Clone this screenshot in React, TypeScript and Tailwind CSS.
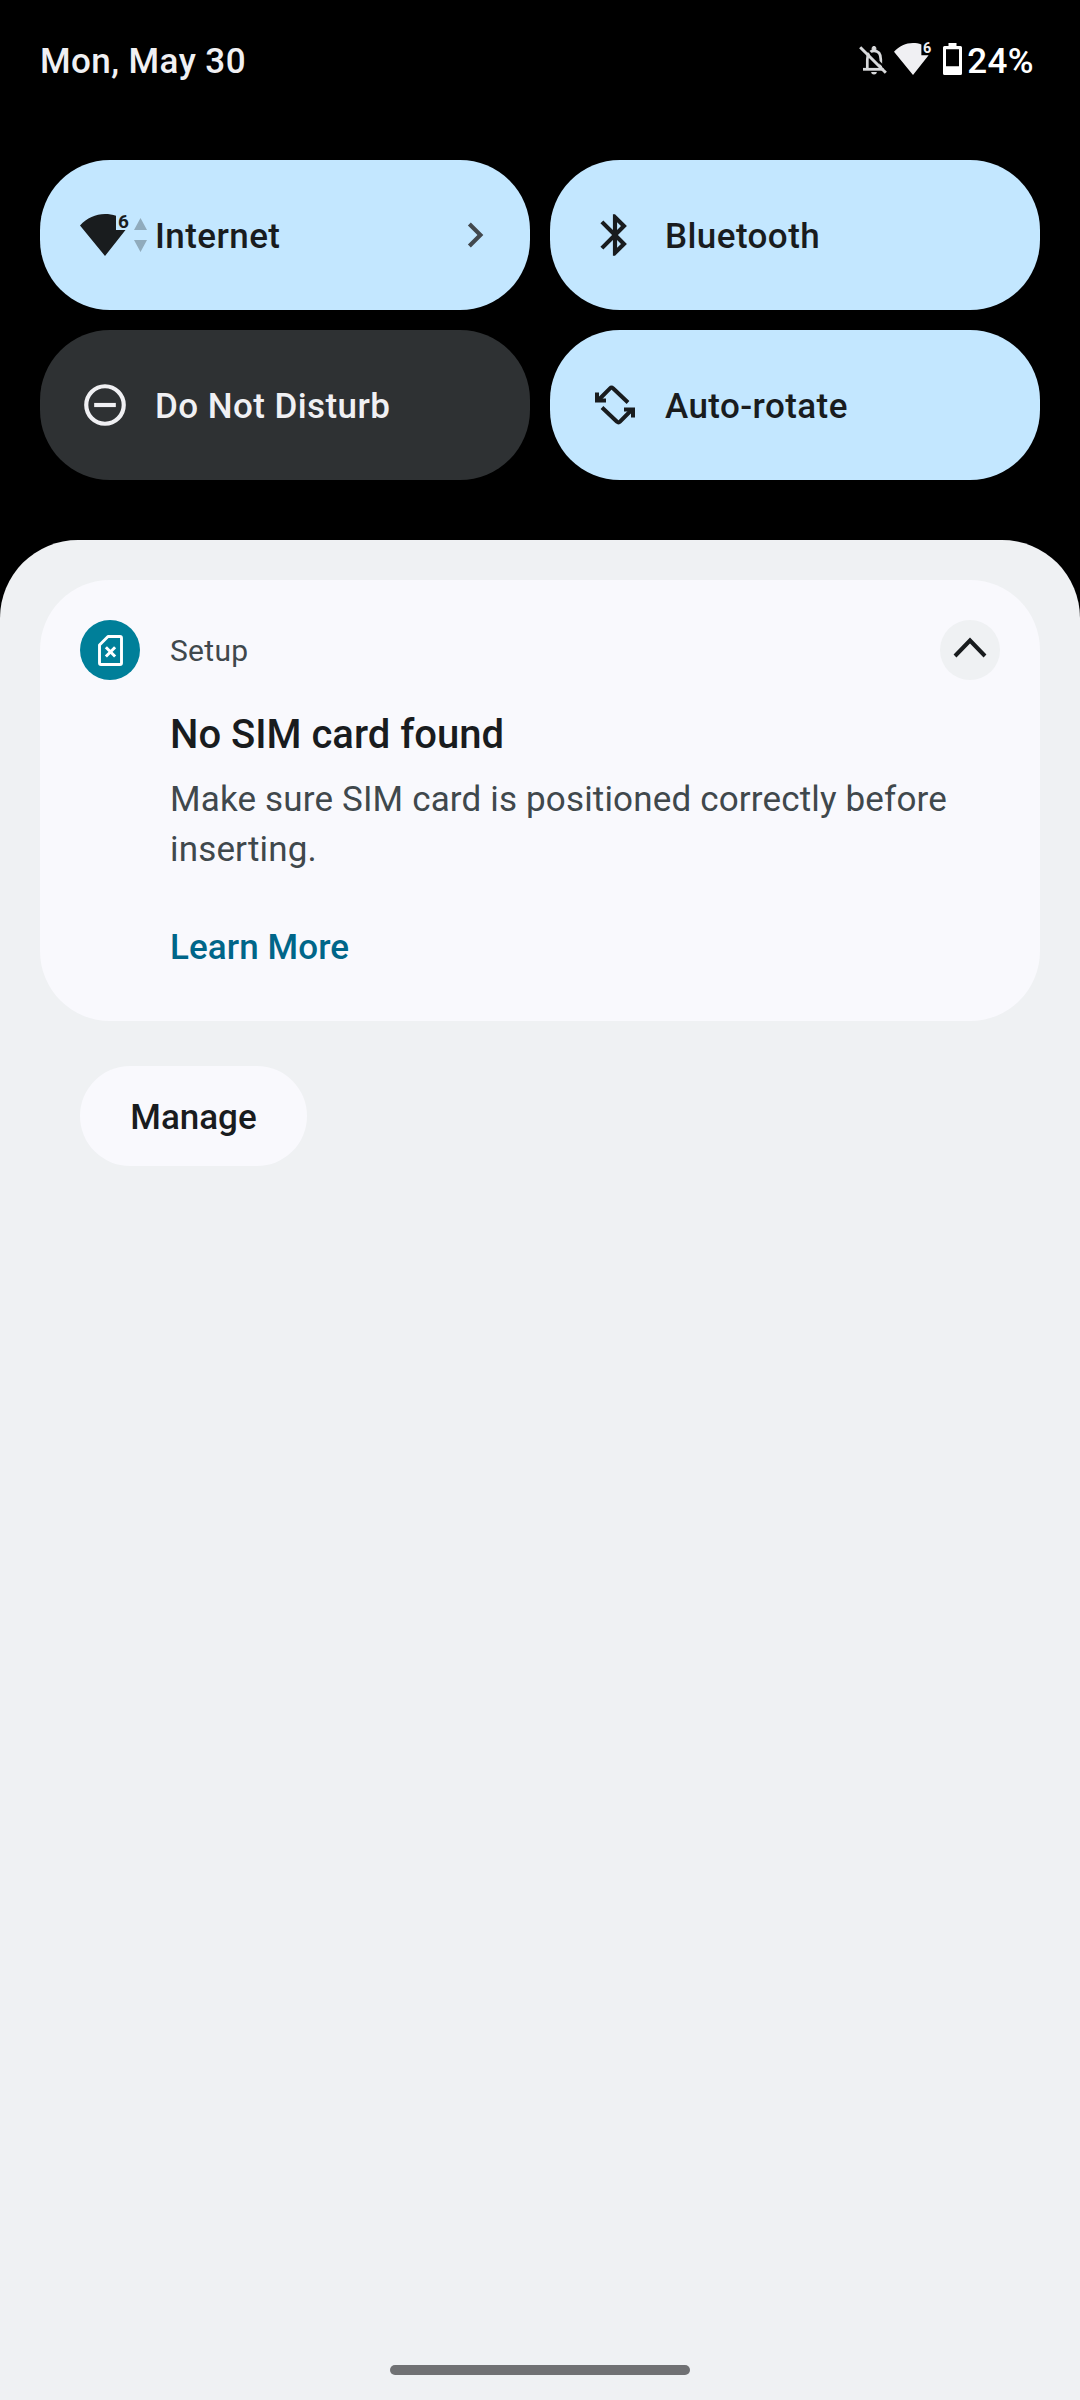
import type { ReactNode } from 'react';

interface IconProps {
  className?: string;
}

interface TileProps {
  label: string;
  icon: ReactNode;
  active?: boolean;
  chevron?: boolean;
}

function BellOffIcon({ className = '' }: IconProps) {
  return (
    <svg viewBox="0 0 28 30" className={className} fill="none" stroke="currentColor">
      <path d="M8.300 23.500V14.500C8.300 9 10.500 5.800 15 5.800S21.800 9 21.800 14.500V22" strokeWidth="2.700" />
      <path d="M4 24.300H24.500" strokeWidth="2.800" />
      <path d="M13.100 5.500V3.300a1.900 1.900 0 0 1 3.800 0V5.500z" fill="currentColor" strokeWidth="1" />
      <path d="M12.200 27h5.600a2.800 2.400 0 0 1-5.600 0z" fill="currentColor" stroke="none" />
      <path d="M4 .8L28 24.800" stroke="#000" strokeWidth="2" />
      <path d="M1.200 2.200L26.800 27.800" strokeWidth="3" />
    </svg>
  );
}

function WifiSixIcon({ className = '' }: IconProps) {
  return (
    <svg viewBox="0 0 50 42" className={`overflow-visible ${className}`} fill="currentColor">
      <path d="M25 42L0 11.500C7 4 15.500 0 25 0C29 0 32.500 .6 36 1.800V16H45.500Z" />
      <text x="38.100" y="13.600" fontSize="19" fontWeight="700" fontFamily="Roboto, sans-serif">
        6
      </text>
    </svg>
  );
}

function BatteryIcon({ className = '' }: IconProps) {
  return (
    <svg viewBox="0 0 19 32" className={className} fill="currentColor">
      <path
        fillRule="evenodd"
        d="M5.500 0h8v3h4A1.500 1.500 0 0 1 19 4.500v26a1.500 1.500 0 0 1-1.500 1.500h-16A1.500 1.500 0 0 1 0 30.500v-26A1.500 1.500 0 0 1 1.500 3h4zM3 6.300v17h13v-17z"
      />
    </svg>
  );
}

function DataArrowsIcon({ className = '' }: IconProps) {
  return (
    <svg viewBox="0 0 13 34" className={className} fill="currentColor">
      <path d="M6.500 0L13 12H0zM6.500 34L0 22H13z" />
    </svg>
  );
}

function BluetoothIcon() {
  return (
    <svg viewBox="0 0 24 24" className="size-[50px]" fill="currentColor">
      <path d="M17.710 7.710L12 2h-1v7.590L6.410 5 5 6.410 10.590 12 5 17.590 6.410 19 11 14.410V22h1l5.710-5.710-4.300-4.290 4.300-4.290zM13 5.830l1.880 1.880L13 9.590V5.830zm1.880 10.460L13 18.170v-3.760l1.880 1.880z" />
    </svg>
  );
}

function DoNotDisturbIcon() {
  return (
    <svg viewBox="0 0 24 24" className="size-[50px]" fill="none" stroke="currentColor" strokeWidth="2">
      <circle cx="12" cy="12" r="9" />
      <path d="M6.800 12h10.400" />
    </svg>
  );
}

function RotateIcon() {
  return (
    <svg viewBox="0 0 50 50" className="size-[50px]" fill="none" stroke="currentColor" strokeWidth="4">
      <path d="M9 19.500L20 8.300Q21.500 6.800 23 8.300L38 22.500" />
      <path d="M41 30.500L30 41.700Q28.500 43.200 27 41.700L12 27.500" />
      <path d="M5 12.500h4v6h7v4H5zM45 37.500h-4v-6h-7v-4h11z" fill="currentColor" stroke="none" />
    </svg>
  );
}

function SimErrorIcon() {
  return (
    <svg viewBox="0 0 25 31" className="h-[31px] w-[25px]" fill="none" stroke="currentColor">
      <path d="M10 1.500H22Q23.500 1.500 23.500 3V28Q23.500 29.500 22 29.500H3Q1.500 29.500 1.500 28V10Z" strokeWidth="2.900" strokeLinejoin="round" />
      <path d="M7.900 12.300L17.100 21.500M17.100 12.300L7.900 21.500" strokeWidth="3" />
    </svg>
  );
}

function Tile({ label, icon, active = false, chevron = false }: TileProps) {
  return (
    <button
      className={`flex h-[150px] items-center rounded-[70px] pr-[30px] pl-10 text-left ${
        active ? 'bg-[#c3e7ff] text-[#191c1e]' : 'bg-[#2e3133] text-[#f0f0f3]'
      }`}
    >
      <span className="flex w-[75px] items-center">{icon}</span>
      <span className="flex-1 pt-1 text-[35px] leading-[50px] font-medium tracking-[0.42px]">{label}</span>
      {chevron && (
        <svg viewBox="0 0 24 24" className="size-[50px] text-[#43494e]" fill="currentColor">
          <path d="M10 6L8.590 7.410 13.170 12l-4.580 4.590L10 18l6-6z" />
        </svg>
      )}
    </button>
  );
}

export default function App() {
  return (
    <div className="flex h-[2400px] w-[1080px] flex-col bg-black font-['Roboto',sans-serif]">
      {/* Status bar */}
      <header className="flex h-[160px] items-start justify-between pt-[37px] pr-[46px] pl-10 text-[#f0f0f3]">
        <span className="text-[35px] leading-[50px] font-medium tracking-[0.42px]">Mon, May 30</span>
        <div className="flex items-start">
          <BellOffIcon className="mt-2 h-[30px] w-7 text-[#d8d9db]" />
          <WifiSixIcon className="mt-1.5 ml-[7px] h-8 w-[38px]" />
          <BatteryIcon className="mt-1.5 ml-[11px] h-8 w-[19px] text-white" />
          <span className="ml-[5px] text-[35px] leading-[50px] font-medium tracking-[0.42px] text-white">24%</span>
        </div>
      </header>

      {/* Quick settings */}
      <section className="grid grid-cols-2 gap-5 px-10 pb-[60px]">
        <Tile
          active
          chevron
          label="Internet"
          icon={
            <>
              <WifiSixIcon className="h-[42px] w-[50px]" />
              <DataArrowsIcon className="ml-1 h-[34px] w-[13px] text-[#90abbc]" />
            </>
          }
        />
        <Tile active label="Bluetooth" icon={<BluetoothIcon />} />
        <Tile label="Do Not Disturb" icon={<DoNotDisturbIcon />} />
        <Tile active label="Auto-rotate" icon={<RotateIcon />} />
      </section>

      {/* Notifications */}
      <main className="flex flex-1 flex-col items-start rounded-t-[78px] bg-[#eff1f3] px-10 pt-10 pb-[25px]">
        <article className="flex h-[441px] w-full items-start rounded-[70px] bg-[#f9f9fd] p-10">
          <div className="flex size-[60px] items-center justify-center rounded-full bg-[#007f99] text-white">
            <SimErrorIcon />
          </div>
          <div className="ml-[30px] flex flex-1 flex-col items-start">
            <span className="mt-[11px] text-[30px] leading-10 tracking-[0.3px] text-[#40484c]">Setup</span>
            <h2 className="mt-[39px] text-[40px] leading-[50px] font-medium text-[#191c1e]">No SIM card found</h2>
            <p className="mt-[15px] w-[800px] text-[35px] leading-[50px] tracking-[0.16px] text-[#40484c]">
              Make sure SIM card is positioned correctly before inserting.
            </p>
            <a href="#" className="mt-12 text-[35px] leading-[50px] font-medium tracking-[0.08px] text-[#006689]">
              Learn More
            </a>
          </div>
          <button className="-ml-[60px] flex size-[60px] items-center justify-center rounded-full bg-[#eff1f3] text-[#191c1e]">
            <svg viewBox="0 0 60 60" className="size-[60px]" fill="none" stroke="currentColor" strokeWidth="4">
              <path d="M15 36L30 20.500L45 36" />
            </svg>
          </button>
        </article>

        <button className="mt-[45px] ml-10 h-[100px] w-[227px] rounded-full bg-[#f9f9fd] pt-1 text-[35px] leading-[50px] font-medium text-[#191c1e]">
          Manage
        </button>

        <div className="mt-auto h-2.5 w-[300px] self-center rounded-full bg-[#707173]" />
      </main>
    </div>
  );
}
